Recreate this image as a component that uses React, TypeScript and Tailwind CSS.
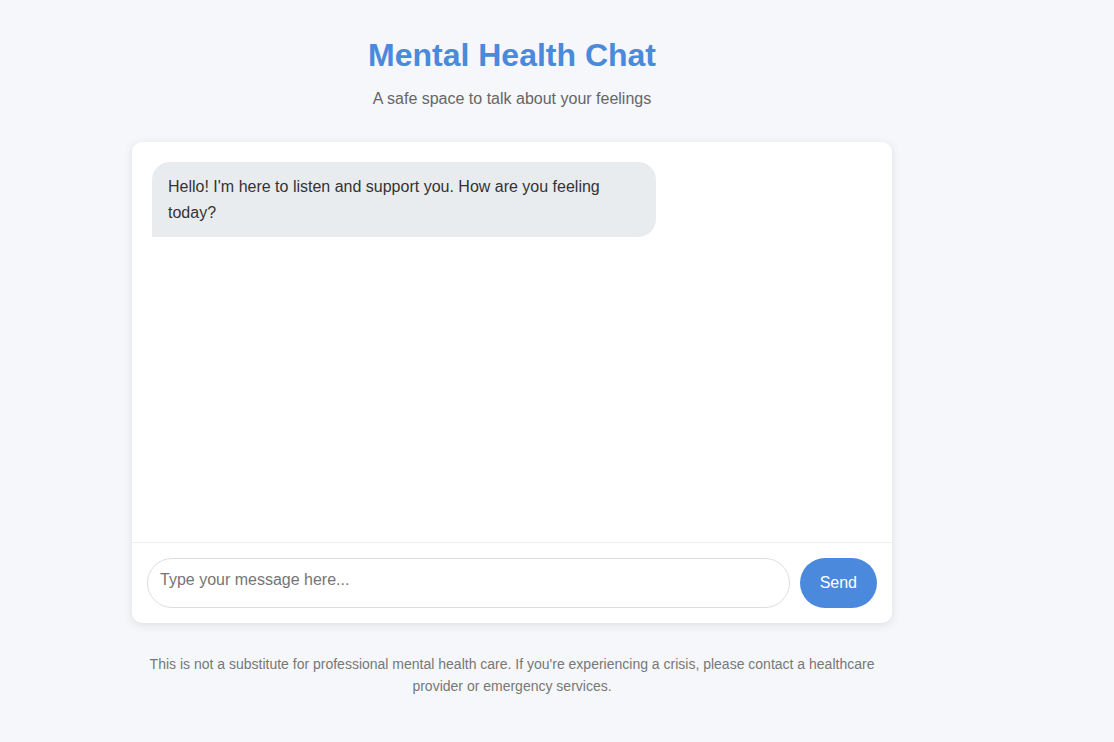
import React from "react";

export default function App() {
  return (
    <div className="min-h-[742px] w-full bg-[#f5f7fa] font-['Liberation_Sans',Arial,sans-serif]">
      <div className="w-[1024px]">
        <div className="mx-auto max-w-[800px] px-5 pt-[37px] pb-5">
          <header className="text-center">
            <h1 className="text-[32px] leading-[37px] font-bold text-[#4a89dc]">Mental Health Chat</h1>
            <p className="mt-[16px] text-[16px] leading-[18px] text-[#666]">A safe space to talk about your feelings</p>
          </header>
          <div className="mt-[34px] overflow-hidden rounded-[10px] bg-white shadow-[0_2px_10px_rgba(0,0,0,0.1)]">
            <div className="flex h-[400px] flex-col p-5">
              <div className="max-w-[70%] self-start rounded-[18px] rounded-bl-none bg-[#e9ecef] px-4 py-3 text-[16px] leading-[1.6] text-[#333]">
                Hello! I'm here to listen and support you. How are you feeling today?
              </div>
            </div>
            <div className="flex gap-[10px] border-t border-[#eee] p-[15px]">
              <input
                type="text"
                placeholder="Type your message here..."
                className="h-[50px] flex-1 rounded-[25px] border border-[#ddd] px-3 pt-0 pb-[6px] text-[16px] text-[#333] outline-none placeholder:text-[#757575]"
              />
              <button className="h-[50px] rounded-[25px] bg-[#4a89dc] px-5 text-[16px] text-white">Send</button>
            </div>
          </div>
          <p className="mt-[30px] text-center text-[14px] leading-[1.6] text-[#777]">
            This is not a substitute for professional mental health care. If you're experiencing a crisis, please contact a healthcare provider or emergency services.
          </p>
        </div>
      </div>
    </div>
  );
}
